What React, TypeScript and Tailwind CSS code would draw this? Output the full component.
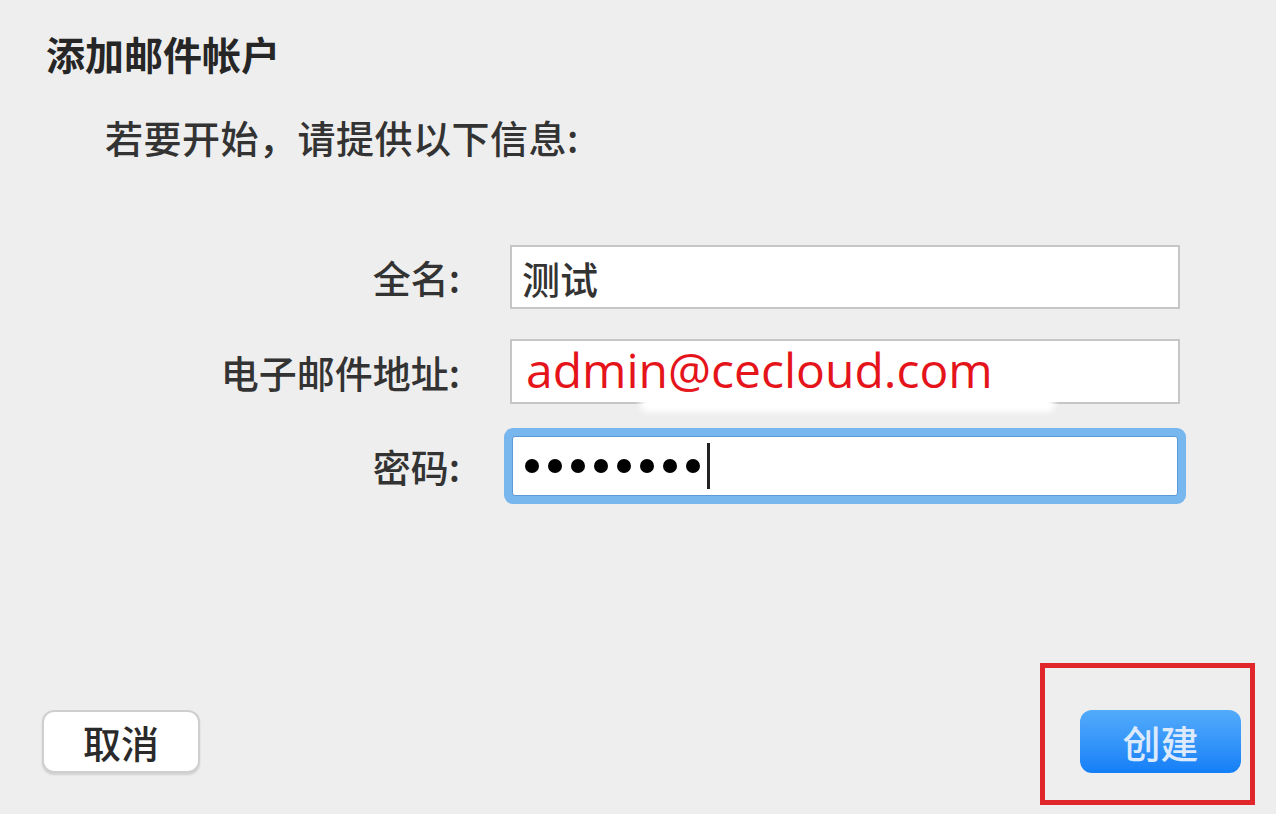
import React from "react";

const cjk = { fontFamily: "'Noto Sans CJK SC', 'Noto Sans', sans-serif" };

export default function App() {
  return (
    <div
      className="relative flex h-[814px] w-[1276px] flex-col overflow-hidden bg-[#eeeeee] text-[#2a2a2a]"
      style={cjk}
    >
      {/* Header */}
      <h1 className="ml-[46px] mt-[31px] text-[39px] font-bold leading-[44px] text-[#262626]">
        添加邮件帐户
      </h1>
      <p className="ml-[105px] mt-[40px] text-[38px] font-medium leading-[44px] tracking-[0.5px] text-[#333]">
        若要开始，请提供以下信息:
      </p>

      {/* Form */}
      <div className="mt-[86px] flex flex-col">
        <div className="flex h-[64px] items-center">
          <label className="w-[460px] text-right text-[38px] font-medium leading-[44px] text-[#333]">
            全名:
          </label>
          <div className="ml-[50px] flex h-[64px] w-[670px] items-center border-2 border-[#c6c6c6] bg-white px-[10px] text-[38px] font-medium text-[#333]">
            测试
          </div>
        </div>

        <div className="mt-[30px] flex h-[65px] items-center">
          <label className="w-[460px] text-right text-[38px] font-medium leading-[44px] text-[#333]">
            电子邮件地址:
          </label>
          <div
            className="ml-[50px] flex h-[65px] w-[670px] items-center border-2 border-[#c6c6c6] bg-white px-[14px] pb-[4px] text-[48px] leading-none text-[#e5141b]"
            style={{ fontFamily: "'Open Sans', sans-serif" }}
          >
            admin@cecloud.com
          </div>
        </div>

        <div className="mt-[32px] flex h-[60px] items-center">
          <label className="w-[460px] text-right text-[38px] font-medium leading-[44px] text-[#333]">
            密码:
          </label>
          <div className="ml-[52px] flex h-[60px] w-[666px] items-center gap-[9px] rounded-[3px] border border-[#5a9ad8] bg-white px-[12px] shadow-[0_0_0_8px_#78b6ee]">
            {[0, 1, 2, 3, 4, 5, 6, 7].map((i) => (
              <span key={i} className="h-[14px] w-[14px] rounded-full bg-black" />
            ))}
            <span className="ml-[-2px] h-[46px] w-[3px] bg-[#222]" />
          </div>
        </div>
      </div>

      {/* redaction smudge */}
      <div className="absolute left-[640px] top-[396px] h-[16px] w-[415px] rounded-full bg-white blur-[3px]" />

      {/* Footer buttons */}
      <div className="mt-auto flex items-end justify-between pb-[9px] pl-[42px] pr-[21px]">
        <button className="mb-[32px] flex h-[63px] w-[158px] items-center justify-center rounded-[12px] border-2 border-[#cfcfcf] bg-white text-[38px] font-medium text-[#2a2a2a] shadow-[0_2px_2px_rgba(0,0,0,0.12)]">
          取消
        </button>
        <div className="border-[5px] border-[#e0252b] pb-[27px] pl-[35px] pr-[9px] pt-[42px]">
          <button className="flex h-[63px] w-[161px] items-center justify-center rounded-[12px] bg-gradient-to-b from-[#52abfb] to-[#127ff7] text-[38px] font-medium text-[#dceafc]">
            创建
          </button>
        </div>
      </div>
    </div>
  );
}
